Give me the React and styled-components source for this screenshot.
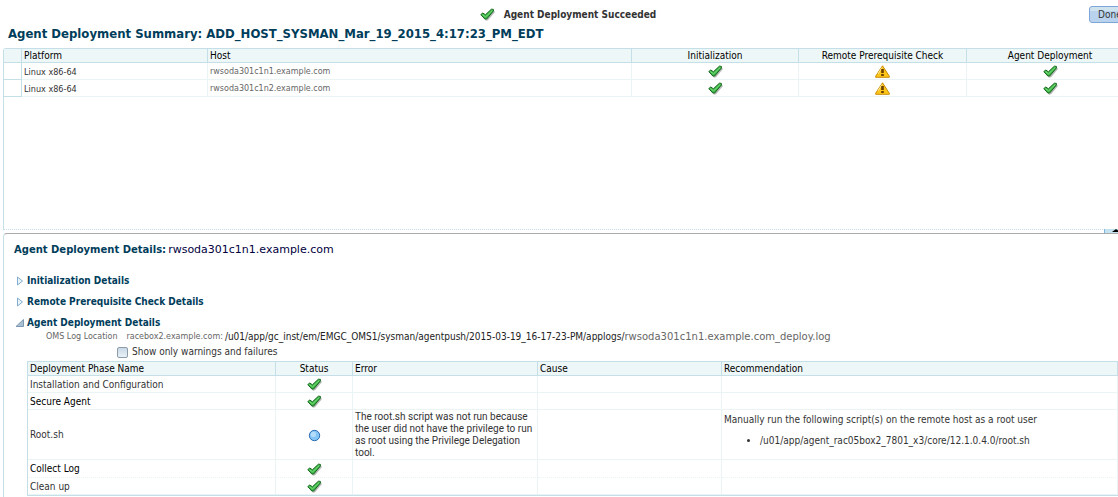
import React, { useState } from "react";
import styled, { createGlobalStyle, css } from "styled-components";

const hosts = ["rwsoda301c1n1.example.com", "rwsoda301c1n2.example.com"];

const phases = [
  { name: "Installation and Configuration", status: "ok" },
  { name: "Secure Agent", status: "ok", strong: true },
  {
    name: "Root.sh",
    status: "info",
    error:
      "The root.sh script was not run because the user did not have the privilege to run as root using the Privilege Delegation tool.",
    recommendation: "Manually run the following script(s) on the remote host as a root user",
    script: "/u01/app/agent_rac05box2_7801_x3/core/12.1.0.4.0/root.sh",
  },
  { name: "Collect Log", status: "ok", strong: true, dotted: true },
  { name: "Clean up", status: "ok" },
];

const CheckIcon = () => (
  <Icon viewBox="0 0 15 13" role="img" aria-label="Succeeded">
    <path d="M3 9 L6 12.8 L8 12.2 L15 4 L13.5 2.5 Z" fill="#b4b8b4" />
    <path
      d="M0.8 6.6 L2.8 5 L5.4 6.8 L11.4 1.2 L13.4 1.4 L13.4 3 L6.6 11 L4.8 11 Z"
      fill="#3fb548"
      stroke="#14661c"
      strokeLinejoin="round"
    />
    <path d="M2.4 6.6 L5.6 8.8 L12.4 2.4" fill="none" stroke="#7be07e" />
  </Icon>
);

const WarningIcon = () => (
  <Icon viewBox="0 0 15 13" role="img" aria-label="Warning">
    <path d="M7.5 0.8 L14.3 11.2 V12.3 H0.7 V11.2 Z" fill="#ffc61a" stroke="#c98a06" strokeLinejoin="round" />
    <path d="M7 2.5 L3 9" stroke="#ffe79a" />
    <path d="M7.5 4 V8 M7.5 9 V11" stroke="#6b3f00" strokeWidth="2.6" />
  </Icon>
);

const InfoIcon = () => (
  <Icon viewBox="0 0 15 13" role="img" aria-label="Not run">
    <circle cx="7.5" cy="6.5" r="5.2" fill="#84c4f6" stroke="#2a6cb4" />
    <circle cx="6.4" cy="5.4" r="2.6" fill="#b4dcfb" />
  </Icon>
);

const Arrow = ({ open }) => (
  <ArrowIcon viewBox="0 0 9 10" aria-hidden="true">
    {open ? (
      <path d="M8.5 1.5 V8.5 H1 Z" fill="#a9c0d4" stroke="#7d98b0" />
    ) : (
      <path d="M2.5 1 L7.5 5 L2.5 9 Z" fill="#eaf4fb" stroke="#82acd0" />
    )}
  </ArrowIcon>
);

const Disclosure = ({ title, open }) => (
  <DisclosureButton type="button" aria-expanded={!!open}>
    <Arrow open={open} />
    {title}
  </DisclosureButton>
);

const App = () => {
  const [onlyFailures, setOnlyFailures] = useState(false);
  const rows = onlyFailures ? phases.filter((p) => p.status !== "ok") : phases;

  return (
    <Page>
      <GlobalStyle />
      <TopBar>
        <StatusMessage>
          <CheckIcon />
          Agent Deployment Succeeded
        </StatusMessage>
        <DoneButton type="button">Done</DoneButton>
      </TopBar>
      <Title>Agent Deployment Summary: ADD_HOST_SYSMAN_Mar_19_2015_4:17:23_PM_EDT</Title>

      <SummaryBox>
        <Table>
          <colgroup>
            <Col $width={18} />
            <Col $width={186} />
            <Col />
            <Col $width={167} />
            <Col $width={168} />
            <Col $width={167} />
          </colgroup>
          <thead>
            <tr>
              <HeadCell aria-label="Row" />
              <HeadCell>Platform</HeadCell>
              <HeadCell>Host</HeadCell>
              <HeadCell $center>Initialization</HeadCell>
              <HeadCell $center>Remote Prerequisite Check</HeadCell>
              <HeadCell $center>Agent Deployment</HeadCell>
            </tr>
          </thead>
          <tbody>
            {hosts.map((host) => (
              <tr key={host}>
                <RowHandle />
                <Cell $small>Linux x86-64</Cell>
                <Cell><HostName>{host}</HostName></Cell>
                <Cell $center><CheckIcon /></Cell>
                <Cell $center><WarningIcon /></Cell>
                <Cell $center><CheckIcon /></Cell>
              </tr>
            ))}
          </tbody>
        </Table>
      </SummaryBox>

      <DetailsPanel>
        <SplitterHandle type="button" aria-label="Collapse pane">
          <svg width="8" height="3" viewBox="0 0 8 3"><path d="M0 3 L4 0 L8 3 Z" /></svg>
        </SplitterHandle>
        <DetailsTitle>
          Agent Deployment Details:
          <span>rwsoda301c1n1.example.com</span>
        </DetailsTitle>
        <Sections>
          <Disclosure title="Initialization Details" />
          <Disclosure title="Remote Prerequisite Check Details" />
          <Disclosure title="Agent Deployment Details" open />
        </Sections>
        <LogLine>
          <LogLabel>OMS Log Location</LogLabel>
          <LogLabel>racebox2.example.com:</LogLabel>
          <LogPath>/u01/app/gc_inst/em/EMGC_OMS1/sysman/agentpush/2015-03-19_16-17-23-PM/applogs/</LogPath>
          <LogFile>rwsoda301c1n1.example.com_deploy.log</LogFile>
        </LogLine>
        <FilterLabel>
          <CheckBox
            type="checkbox"
            checked={onlyFailures}
            onChange={(e) => setOnlyFailures(e.target.checked)}
          />
          Show only warnings and failures
        </FilterLabel>

        <PhaseBox>
          <Table>
            <colgroup>
              <Col $width={248} />
              <Col $width={77} />
              <Col $width={185} />
              <Col $width={184} />
              <Col />
            </colgroup>
            <thead>
              <tr>
                <HeadCell>Deployment Phase Name</HeadCell>
                <HeadCell $center>Status</HeadCell>
                <HeadCell>Error</HeadCell>
                <HeadCell>Cause</HeadCell>
                <HeadCell>Recommendation</HeadCell>
              </tr>
            </thead>
            <tbody>
              {rows.map((p) => (
                <tr key={p.name}>
                  <Cell $strong={p.strong} $dotted={p.dotted}>{p.name}</Cell>
                  <Cell $center $dotted={p.dotted}>{p.status === "ok" ? <CheckIcon /> : <InfoIcon />}</Cell>
                  <Cell $dotted={p.dotted}>{p.error && <ErrorText>{p.error}</ErrorText>}</Cell>
                  <Cell $dotted={p.dotted} />
                  <Cell $dotted={p.dotted}>
                    {p.recommendation}
                    {p.script && (
                      <ScriptList>
                        <li>{p.script}</li>
                      </ScriptList>
                    )}
                  </Cell>
                </tr>
              ))}
            </tbody>
          </Table>
        </PhaseBox>
      </DetailsPanel>
    </Page>
  );
};

const wideFont = `"DejaVu Sans", sans-serif`;

const GlobalStyle = createGlobalStyle`
  body {
    margin: 0;
    background: #fff;
    color: #333;
    font-family: "DejaVu Sans Condensed", "DejaVu Sans", sans-serif;
    font-size: 10px;
    line-height: 12px;
  }
  * {
    box-sizing: border-box;
  }
`;

const Page = styled.div`
  overflow: hidden;
  padding-left: 3px;
`;

const TopBar = styled.header`
  display: grid;
  grid-template-columns: 1fr auto 1fr;
  align-items: center;
  margin-right: -21px;
  padding: 6px 6px 0 0;
`;

const StatusMessage = styled.div`
  grid-column: 2;
  display: flex;
  gap: 9px;
  font-weight: bold;
  line-height: 14px;
`;

const DoneButton = styled.button`
  justify-self: end;
  width: 44px;
  height: 17px;
  padding: 0 0 0 8px;
  border: 1px solid #7ea6d8;
  border-radius: 3px;
  background: linear-gradient(#cfe3ee 30%, #b9d3ef 30%);
  color: #333;
  font: inherit;
  text-align: left;
`;

const Title = styled.h1`
  margin: 2px 5px 6px;
  color: #003d5b;
  font-size: 13px;
  line-height: 17px;
`;

const SummaryBox = styled.section`
  height: 182px;
  margin-right: -17px;
  border: 1px solid #c5dfe8;
  border-bottom-style: dotted;
  border-radius: 3px 0 0 0;
`;

const Table = styled.table`
  width: 100%;
  table-layout: fixed;
  border-collapse: separate;
  border-spacing: 0;
`;

const Col = styled.col`
  ${(props) => props.$width && css`
    width: ${props.$width}px;
  `}
`;

const cellStyle = css`
  padding: 1px 2px 0;
  text-align: ${(props) => (props.$center ? "center" : "left")};
  font-size: ${(props) => (props.$small ? "9px" : "10px")};
`;

const HeadCell = styled.th`
  ${cellStyle}
  height: 14px;
  border-right: 1px solid #c5dfe8;
  border-bottom: 1px solid #c5dfe8;
  background: #eef7f7;
  color: #000;
  font-weight: normal;
`;

const Cell = styled.td`
  ${cellStyle}
  height: ${(props) => (props.$dotted ? "18px" : "17px")};
  border-right: 1px solid #eaf4f4;
  border-bottom: 1px ${(props) => (props.$dotted ? "dotted" : "solid")} #eaf4f4;
  color: ${(props) => (props.$strong ? "#000" : "#333")};
`;

const RowHandle = styled.td`
  height: 17px;
  border-right: 1px solid #c5dfe8;
  border-bottom: 1px solid #c5dfe8;
`;

const HostName = styled.span`
  color: #666;
  font-family: ${wideFont};
  font-size: 8px;
`;

const Icon = styled.svg`
  width: 15px;
  height: 13px;
  vertical-align: middle;
`;

const DetailsPanel = styled.section`
  position: relative;
  margin: 3px -17px 0 0;
  padding: 8px 16px 2px 10px;
  border: 1px solid #c5dfe8;
  border-top-color: #aaa;
  border-bottom: 0;
  border-radius: 4px 0 0 0;
`;

const SplitterHandle = styled.button`
  position: absolute;
  top: -5px;
  right: 0;
  display: flex;
  width: 30px;
  height: 4px;
  padding: 0 0 0 7px;
  border: 0;
  border-left: 1px solid #7eb6dc;
  background: #c5e2f0;
`;

const DetailsTitle = styled.h2`
  display: flex;
  align-items: baseline;
  gap: 2px;
  margin: 0 0 15px;
  color: #003d5b;
  font-family: ${wideFont};
  font-size: 10px;
  line-height: 16px;

  span {
    color: #000040;
    font-size: 11px;
    font-weight: normal;
  }
`;

const Sections = styled.div`
  display: grid;
  justify-items: start;
  gap: 5px;
`;

const DisclosureButton = styled.button`
  display: flex;
  align-items: center;
  gap: 2px;
  height: 16px;
  padding: 0;
  border: 0;
  background: none;
  color: #003d5b;
  font: inherit;
  font-weight: bold;
`;

const ArrowIcon = styled.svg`
  width: 11px;
  height: 10px;
`;

const LogLine = styled.div`
  display: flex;
  align-items: center;
  height: 12px;
  padding-left: 32px;
  white-space: nowrap;
`;

const LogLabel = styled.span`
  margin-right: 9px;
  color: #666;
  font-family: ${wideFont};
  font-size: 8px;

  & + & {
    margin-right: 2px;
  }
`;

const LogPath = styled.span`
  color: #222;
`;

const LogFile = styled.span`
  color: #666;
  font-family: ${wideFont};
`;

const FilterLabel = styled.label`
  display: flex;
  align-items: center;
  gap: 4px;
  height: 18px;
  padding-left: 103px;
`;

const CheckBox = styled.input`
  appearance: none;
  width: 11px;
  height: 11px;
  margin: 0;
  border: 1px solid #8d9aa8;
  border-radius: 2px;
  background: linear-gradient(#c9d9e6, #e9f1f7);

  &:checked {
    background: #4d7ea8;
  }
`;

const PhaseBox = styled.div`
  margin-left: 13px;
  border: 1px solid #c5dfe8;
  border-right: 0;
`;

const ErrorText = styled.p`
  margin: 0;
  font-family: Roboto, sans-serif;
`;

const ScriptList = styled.ul`
  margin: 9px 0;
  padding-left: 36px;
`;

export default App;
